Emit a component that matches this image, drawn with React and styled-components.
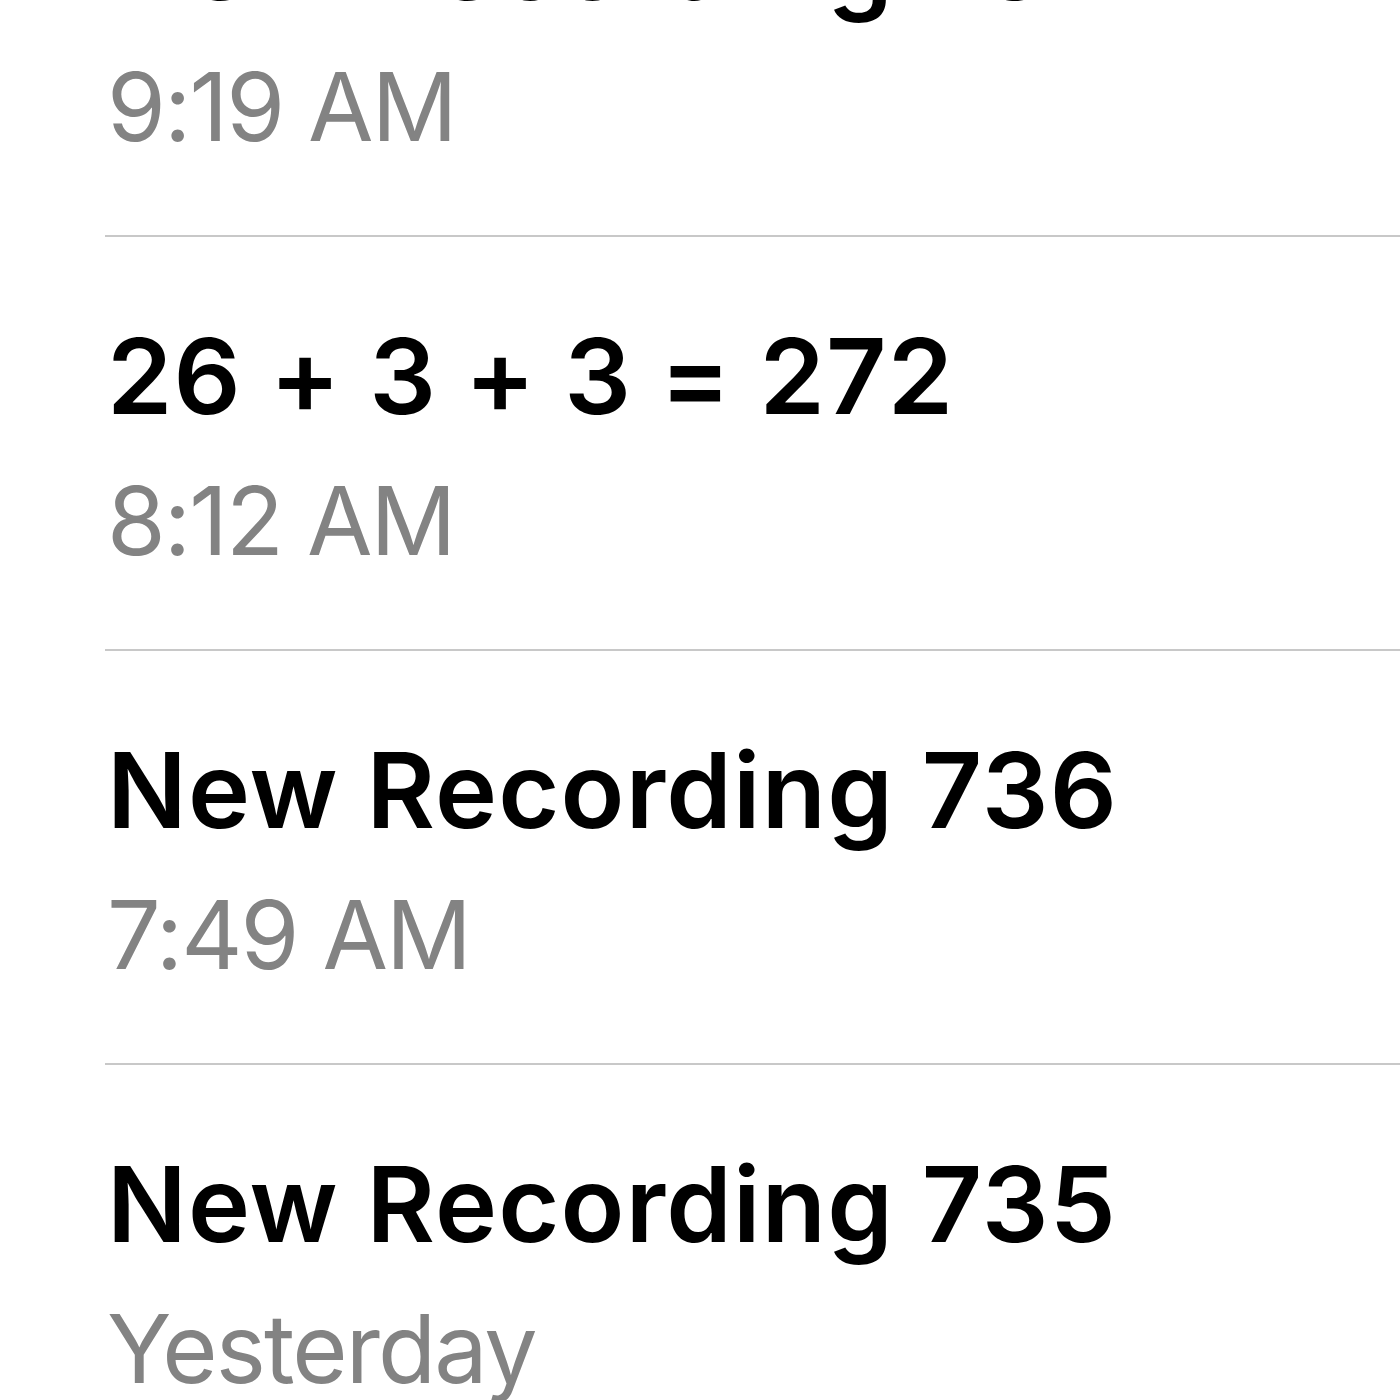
import React from "react";
import styled, { createGlobalStyle } from "styled-components";

const Global = createGlobalStyle`
  html, body { margin: 0; padding: 0; background: #ffffff; }
  body { width: 1400px; height: 1400px; overflow: hidden; }
`;

const Screen = styled.div`
  width: 1400px;
  height: 1400px;
  overflow: hidden;
  background: #fff;
  font-family: Inter, "Noto Sans", "Liberation Sans", sans-serif;
`;

const List = styled.ul`
  list-style: none;
  margin: -179px 0 0 0;
  padding: 0;
`;

const Row = styled.li`
  margin-left: 105px;
  padding: 74px 0 71px 2px;
  border-top: 2px solid #c8c8c8;
  display: flex;
  flex-direction: column;
  gap: 22px;
`;

const Title = styled.div`
  font-size: 105px;
  line-height: 130px;
  font-weight: 600;
  letter-spacing: 1.2px;
  color: #000;
  white-space: nowrap;
`;

const Meta = styled.div`
  font-size: 95px;
  line-height: 115px;
  font-weight: 400;
  letter-spacing: -1.9px;
  color: #838383;
  white-space: nowrap;
`;

const items = [
  { title: "New Recording 737", meta: "9:19 AM" },
  { title: "26 + 3 + 3 = 272", meta: "8:12 AM" },
  { title: "New Recording 736", meta: "7:49 AM" },
  { title: "New Recording 735", meta: "Yesterday" },
];

export default function App() {
  return (
    <Screen>
      <Global />
      <List>
        {items.map((it) => (
          <Row key={it.title}>
            <Title>{it.title}</Title>
            <Meta>{it.meta}</Meta>
          </Row>
        ))}
      </List>
    </Screen>
  );
}
